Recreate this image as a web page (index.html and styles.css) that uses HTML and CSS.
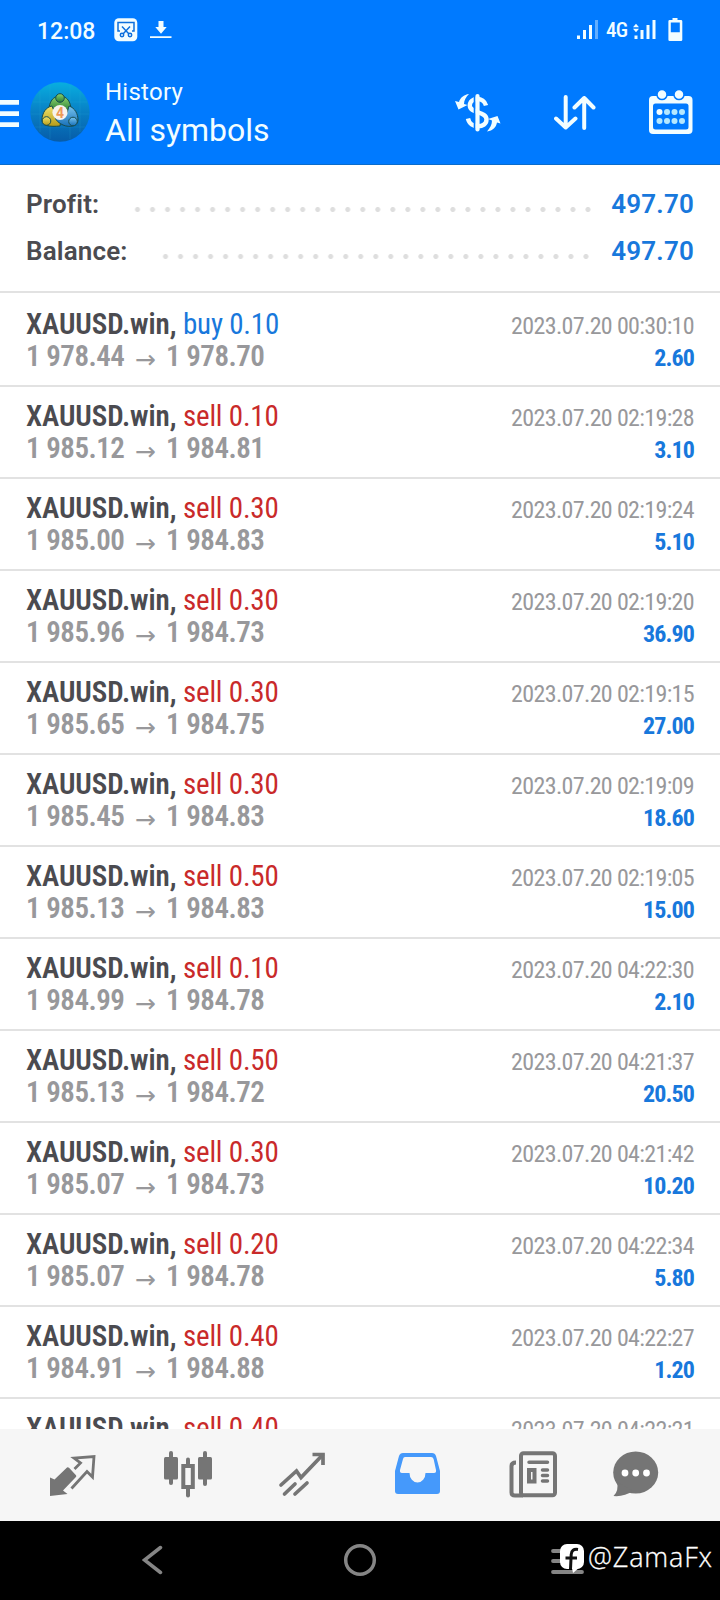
FILE: index.html
```
<!DOCTYPE html>
<html lang="en">
<head>
<meta charset="utf-8">
<title>History</title>
<link rel="stylesheet" href="styles.css">
</head>
<body>
<div class="phone">
  <header class="header">
    <div class="status">
      <span class="clock">12:08</span>
      <svg class="st-cut" width="24" height="24" viewBox="0 0 24 24"><rect x=".3" y=".3" width="23" height="23" rx="4.5" fill="#f2fdff"/><g fill="none" stroke="#0d6fdc" stroke-width="1.5"><path d="M6 13H4V4.500H20V13H18"/><path d="M8 8.500L15 16M16 8.500L9 16"/><circle cx="8" cy="17" r="1.700"/><circle cx="16" cy="17" r="1.700"/></g></svg>
      <svg class="st-down" width="22" height="20" viewBox="0 0 22 20" fill="#f2fdff"><path d="M8.500 1h5v6h3.200L11 13.700 5.300 7h3.200zM0 16.200h21.500v1.800H0z"/></svg>
      <svg class="st-sig" width="22" height="20" viewBox="0 0 22 20" fill="#f2fdff"><path d="M0 15.500h3V19H0zM6 10h3v9H6zM12 5h3v14h-3z"/><path d="M18 0h3v19h-3z" opacity=".4"/></svg>
      <span class="net">4G</span>
      <svg class="st-sig2" width="23" height="20" viewBox="0 0 23 20" fill="#f2fdff"><path d="M1.500 15.500h3V19h-3zM7.500 10h3v9h-3zM13.500 5h3v14h-3zM19.500 0h3v19h-3zM0 7.200L3 3.700 6 7.200zM0 8.800h6L3 12.300z"/></svg>
      <svg class="st-bat" width="15" height="24" viewBox="0 0 15 24"><path fill="#f2fdff" fill-rule="evenodd" d="M4.500 0h5v2H13a1.300 1.300 0 0 1 1.300 1.300v18.400A1.300 1.300 0 0 1 13 23H1.700A1.300 1.300 0 0 1 .4 21.700V3.300A1.300 1.300 0 0 1 1.700 2h2.800zM2.800 4.500v9.700h9V4.500z"/></svg>
    </div>
    <div class="appbar">
      <svg class="menu" width="19" height="28" viewBox="0 0 19 28"><path fill="#f2fdff" d="M0 0h19v4.700H0zM0 11.300h19V16H0zM0 22.300h19V27H0z"/></svg>
      <svg class="logo" width="60" height="60" viewBox="0 0 60 60">
        <defs>
          <linearGradient id="bg" x1="0" y1="0" x2="0" y2="1"><stop offset="0" stop-color="#08aee0"/><stop offset=".5" stop-color="#087fc4"/><stop offset="1" stop-color="#075ca8"/></linearGradient>
          <linearGradient id="gr" x1="0" y1="0" x2="0" y2="1"><stop offset="0" stop-color="#8fd56d"/><stop offset="1" stop-color="#257b35"/></linearGradient>
          <linearGradient id="ye" x1="0" y1="0" x2="0" y2="1"><stop offset="0" stop-color="#f1e36c"/><stop offset="1" stop-color="#b69b18"/></linearGradient>
          <linearGradient id="bl" x1="0" y1="0" x2="0" y2="1"><stop offset="0" stop-color="#79c5ef"/><stop offset="1" stop-color="#176fb8"/></linearGradient>
        </defs>
        <circle cx="30" cy="30" r="29.700" fill="url(#bg)"/>
        <path d="M10 10V50M20 3V57M40 3V57M50 10V50M3 20H57M1 32H59M5 45H55" stroke="#35b6dd" stroke-width=".6" opacity=".3"/>
        <g stroke="#174d50" stroke-width="1">
          <path fill="url(#gr)" d="M19 28c0-8 4-14 11-14s11 6 11 14l-4 2H23z"/>
          <path fill="url(#ye)" d="M22 24c-6 1-10 7-10 14 0 6 8 7 18 6l1-7-7-8z"/>
          <path fill="url(#bl)" d="M39 24c6 2 9 8 9 14 0 6-8 8-15 5-4-2-7-4-8-8l12-4z"/>
          <circle cx="30" cy="16" r="4.300" fill="url(#gr)"/>
          <circle cx="16.500" cy="39" r="4.300" fill="url(#ye)"/>
          <circle cx="43" cy="39.500" r="4.300" fill="url(#bl)"/>
        </g>
        <circle cx="30" cy="30.500" r="7.600" fill="#f7f3ee"/>
        <text class="logo-num" x="30" y="35.500" text-anchor="middle">4</text>
      </svg>
      <div class="titles"><div class="sub">History</div><div class="main">All symbols</div></div>
      <svg class="ic-dollar" width="46" height="40" viewBox="0 0 46 40"><g fill="none" stroke="#f2fdff"><path stroke-width="4.400" d="M31 12.500C29 3.500 14.800 4 14.800 12.500 14.800 20.500 31.500 18 31.500 26.500 31.500 35.500 15 36 13 25.500"/></g><path stroke="#007aff" stroke-width="2" d="M19.700 0V40"/><path stroke="#f2fdff" stroke-width="4.200" stroke-linecap="round" d="M22.500 3V36.500"/><path fill="#f2fdff" d="M14 1C9 1.500 5 5 4 9L0 8l3.500 8.500L12.500 12 9 11c0-4 2-7 5-10zM32 38.500c6-1 9-4 10-9L45.500 30.500 42.500 23l-9.500 3 4 1.500c0 4-2 7.500-5 11z"/></svg>
      <svg class="ic-sort" width="42" height="36" viewBox="0 0 42 36"><path fill="none" stroke="#f2fdff" stroke-width="4" stroke-linecap="round" stroke-linejoin="round" d="M11.700 2V32M2 23.500L11.700 32.500 21.500 23.500M30.200 33V3M20.500 12.500L30.200 3 39.500 12.500"/></svg>
      <svg class="ic-cal" width="44" height="44" viewBox="0 0 44 44"><rect x="0" y="6" width="43.500" height="38" rx="4" fill="#f2fdff"/><rect x="4" y="13.500" width="35.500" height="26" rx="2.500" fill="#007aff"/><g fill="#f2fdff" stroke="#007aff" stroke-width="1.500"><circle cx="13" cy="4.600" r="5"/><circle cx="30" cy="4.600" r="5"/></g><g fill="#b5e8ff"><circle cx="10.500" cy="22" r="3" fill="#f2fdff"/><circle cx="18" cy="22" r="3"/><circle cx="25.500" cy="22" r="3"/><circle cx="33" cy="22" r="3"/><circle cx="10.500" cy="31" r="3"/><circle cx="18" cy="31" r="3"/><circle cx="25.500" cy="31" r="3"/><circle cx="33" cy="31" r="3"/></g></svg>
    </div>
  </header>

  <section class="summary">
    <div class="sum"><span class="k">Profit:</span><i class="dots d1"></i><span class="v">497.70</span></div>
    <div class="sum"><span class="k">Balance:</span><i class="dots d2"></i><span class="v">497.70</span></div>
  </section>

  <main class="list">
    <article class="row"><div class="line"><span class="sym">XAUUSD.win, <b class="buy">buy 0.10</b></span><span class="date">2023.07.20 00:30:10</span></div><div class="line"><span class="price">1 978.44<i>→</i>1 978.70</span><span class="gain">2.60</span></div></article>
    <article class="row"><div class="line"><span class="sym">XAUUSD.win, <b class="sell">sell 0.10</b></span><span class="date">2023.07.20 02:19:28</span></div><div class="line"><span class="price">1 985.12<i>→</i>1 984.81</span><span class="gain">3.10</span></div></article>
    <article class="row"><div class="line"><span class="sym">XAUUSD.win, <b class="sell">sell 0.30</b></span><span class="date">2023.07.20 02:19:24</span></div><div class="line"><span class="price">1 985.00<i>→</i>1 984.83</span><span class="gain">5.10</span></div></article>
    <article class="row"><div class="line"><span class="sym">XAUUSD.win, <b class="sell">sell 0.30</b></span><span class="date">2023.07.20 02:19:20</span></div><div class="line"><span class="price">1 985.96<i>→</i>1 984.73</span><span class="gain">36.90</span></div></article>
    <article class="row"><div class="line"><span class="sym">XAUUSD.win, <b class="sell">sell 0.30</b></span><span class="date">2023.07.20 02:19:15</span></div><div class="line"><span class="price">1 985.65<i>→</i>1 984.75</span><span class="gain">27.00</span></div></article>
    <article class="row"><div class="line"><span class="sym">XAUUSD.win, <b class="sell">sell 0.30</b></span><span class="date">2023.07.20 02:19:09</span></div><div class="line"><span class="price">1 985.45<i>→</i>1 984.83</span><span class="gain">18.60</span></div></article>
    <article class="row"><div class="line"><span class="sym">XAUUSD.win, <b class="sell">sell 0.50</b></span><span class="date">2023.07.20 02:19:05</span></div><div class="line"><span class="price">1 985.13<i>→</i>1 984.83</span><span class="gain">15.00</span></div></article>
    <article class="row"><div class="line"><span class="sym">XAUUSD.win, <b class="sell">sell 0.10</b></span><span class="date">2023.07.20 04:22:30</span></div><div class="line"><span class="price">1 984.99<i>→</i>1 984.78</span><span class="gain">2.10</span></div></article>
    <article class="row"><div class="line"><span class="sym">XAUUSD.win, <b class="sell">sell 0.50</b></span><span class="date">2023.07.20 04:21:37</span></div><div class="line"><span class="price">1 985.13<i>→</i>1 984.72</span><span class="gain">20.50</span></div></article>
    <article class="row"><div class="line"><span class="sym">XAUUSD.win, <b class="sell">sell 0.30</b></span><span class="date">2023.07.20 04:21:42</span></div><div class="line"><span class="price">1 985.07<i>→</i>1 984.73</span><span class="gain">10.20</span></div></article>
    <article class="row"><div class="line"><span class="sym">XAUUSD.win, <b class="sell">sell 0.20</b></span><span class="date">2023.07.20 04:22:34</span></div><div class="line"><span class="price">1 985.07<i>→</i>1 984.78</span><span class="gain">5.80</span></div></article>
    <article class="row"><div class="line"><span class="sym">XAUUSD.win, <b class="sell">sell 0.40</b></span><span class="date">2023.07.20 04:22:27</span></div><div class="line"><span class="price">1 984.91<i>→</i>1 984.88</span><span class="gain">1.20</span></div></article>
    <article class="row"><div class="line"><span class="sym">XAUUSD.win, <b class="sell">sell 0.40</b></span><span class="date">2023.07.20 04:22:21</span></div></article>
  </main>

  <nav class="tabs">
    <svg width="48" height="48" viewBox="0 0 48 48"><path fill="#757575" d="M1 26.500L5.500 28.500 18 16.500q1-.7 2 .3l7 7.500q.8 1-.3 2L14 39.500l4.500 3.500-17.500 2z"/><path fill="none" stroke="#757575" stroke-width="2.800" d="M25.500 18L31.500 12 25 7 45 5.500 43.500 26 38 20.500 22.500 37.500"/></svg>
    <svg width="48" height="48" viewBox="0 0 48 48"><g fill="#757575"><rect x="0" y="6" width="14" height="22.500" rx="1.500"/><rect x="5" y="0" width="4" height="34" rx="2"/><rect x="34" y="6" width="14" height="22.500" rx="1.500"/><rect x="39" y="0" width="4" height="35" rx="2"/><rect x="22" y="6.500" width="4" height="40" rx="2"/></g><rect x="19.300" y="15" width="9.500" height="21" fill="#f6f6f6" stroke="#757575" stroke-width="4"/></svg>
    <svg width="48" height="48" viewBox="0 0 48 48"><g fill="none" stroke="#757575" stroke-width="3.700"><path stroke-linecap="round" d="M3 34L18.500 20 23 26.500 44.500 4M6.500 43L17 33M17 43L29 32"/><path d="M34.500 3.500H45V14"/></g></svg>
    <svg width="48" height="48" viewBox="0 0 48 48"><path fill="#4599fb" d="M9 2h29q3 0 4 3l4 15v20q0 3-3 3H4q-3 0-3-3V20L5 5q1-3 4-3z"/><path fill="#f6f6f6" d="M11 6h26q2 0 2.600 2L42 19q.5 3-2 3h-8.500a8 9.500 0 0 1-16 0H8q-2.500 0-2-3L9 8q.4-2 2-2z"/></svg>
    <svg width="48" height="48" viewBox="0 0 48 48"><g fill="none" stroke="#757575" stroke-width="4"><rect x="12" y="2.300" width="34" height="42" rx="2.500"/><path d="M7 11.500Q2.500 11.500 2.500 15V41.500Q2.500 44.500 6 44.500H14"/><path stroke-linecap="round" stroke-width="3.500" d="M20 11.300H38.500M33.500 19H38.500M33.500 24.500H38.500M33.500 30H38.500"/><rect x="20" y="19" width="5.500" height="11.500"/></g></svg>
    <svg width="48" height="48" viewBox="0 0 48 48"><ellipse cx="23.700" cy="21.500" rx="22.500" ry="21" fill="#757575"/><path fill="#757575" d="M5 31q2 9-3.500 14Q12 46 21 40z"/><g fill="#fff"><circle cx="13" cy="22" r="3.400"/><circle cx="23.700" cy="22" r="3.400"/><circle cx="34.500" cy="22" r="3.400"/></g></svg>
  </nav>

  <footer class="sysnav">
    <svg class="back" width="22" height="30" viewBox="0 0 22 30"><path d="M18.500 2.500L2.500 15 18.500 27.500" fill="none" stroke="#858585" stroke-width="3.500" stroke-linecap="round"/></svg>
    <svg class="home" width="34" height="34" viewBox="0 0 34 34"><circle cx="17" cy="17" r="14.300" fill="none" stroke="#858585" stroke-width="3.500"/></svg>
    <svg class="recent" width="36" height="32" viewBox="0 0 36 32"><path d="M2 7H29M2 17H29M2 28H31" stroke="#858585" stroke-width="3.800" stroke-linecap="round"/><rect x="9" y="0" width="24" height="25" rx="7" fill="#fff"/><path fill="#fff" d="M21 24l1 5 7-6z"/><path d="M27 5.500Q20.500 4.500 20.200 10.500L19.500 25M14.500 14H26" fill="none" stroke="#111" stroke-width="3"/></svg>
    <span class="handle">@ZamaFx</span>
  </footer>
</div>
</body>
</html>
```
FILE: styles.css
```
body { margin: 0; background: #fff; font-family: Roboto, "Liberation Sans", sans-serif; }
.phone { width: 720px; height: 1600px; display: flex; flex-direction: column; overflow: hidden; }
svg { flex: none; display: block; }
.header { height: 165px; box-sizing: border-box; background: #007aff; border-bottom: 1px solid #0b6ccb; color: #f2fdff; flex: none; }
.status { height: 60px; display: flex; align-items: center; padding-left: 37px; }
.clock { font-size: 23px; font-weight: 500; width: 77px; margin-top: 2px; }
.st-down { margin-left: 12px; }
.st-sig { margin-left: 405px; }
.net { font-family: "Roboto Condensed", Roboto, sans-serif; font-stretch: 75%; font-size: 21px; font-weight: 500; letter-spacing: -.7px; width: 28px; margin-left: 7px; }
.st-sig2 { margin-left: -1px; }
.st-bat { margin-left: 12px; }
.appbar { display: flex; height: 104px; align-items: flex-start; }
.menu { margin-top: 40px; }
.logo { margin: 22px 0 0 11px; }
.logo-num { font: bold 14px Roboto, sans-serif; fill: #ed9a58; }
.titles { margin: 18px 0 0 15px; width: 350px; white-space: nowrap; }
.sub { font-size: 24px; line-height: 28px; letter-spacing: .25px; }
.main { font-size: 32px; line-height: 38px; margin-top: 5px; }
.ic-dollar { margin: 33px 0 0 0; }
.ic-sort { margin: 35px 0 0 53px; }
.ic-cal { margin: 30px 0 0 53px; }
.summary { height: 126px; box-sizing: border-box; padding: 16px 26px 0; flex: none; }
.sum { display: flex; height: 47px; line-height: 47px; font-size: 26px; letter-spacing: .15px; }
.k { font-weight: 600; color: #4b4b50; flex: 1; }
.v { font-weight: 600; color: #1878dc; text-align: right; width: 102px; letter-spacing: .2px; }
.dots { height: 5px; margin-top: 26px; background: radial-gradient(circle, #dedede 2.1px, transparent 2.9px) 0 0 / 15.03px 5px repeat-x; }
.d1 { width: 462.2px; }
.d2 { width: 434.2px; }
.list { border-top: 2px solid #e2e2e2; padding-top: 2px; flex: 1; min-height: 0; overflow: hidden; font-family: "Roboto Condensed", Roboto, sans-serif; font-stretch: 75%; }
.row { height: 92px; box-sizing: border-box; border-bottom: 2px solid #e2e2e2; padding: 13px 26px 0; }
.line { display: flex; justify-content: space-between; align-items: baseline; height: 32px; line-height: 32px; white-space: nowrap; }
.sym, .price { font-size: 29px; font-weight: 600; color: #4b4b50; letter-spacing: -.08px; }
.sym b { font-weight: 400; letter-spacing: -.2px; }
.buy { color: #1878dc; }
.sell { color: #c92a2a; }
.price { color: #98989b; letter-spacing: -.5px; }
.price i { font: normal 25px/0 "DejaVu Sans", sans-serif; letter-spacing: 0; vertical-align: -2px; display: inline-block; width: 41.500px; text-align: center; }
.date { font-size: 24px; color: #98989b; letter-spacing: -.65px; }
.gain { font-size: 24px; font-weight: 700; color: #1878dc; letter-spacing: -.9px; }
.tabs { height: 92px; background: #f6f6f6; flex: none; display: grid; grid-template-columns: 115px 114px 116px 115px 103px 105px; padding: 22px 3px 0 49px; box-sizing: border-box; }
.sysnav { height: 79px; background: #000; flex: none; display: flex; align-items: flex-start; color: #fff; }
.back { margin: 24px 0 0 142px; }
.home { margin: 22px 0 0 179px; }
.recent { margin: 23px 0 0 174px; }
.handle { font: 300 27px/34px "Open Sans", "Noto Sans", sans-serif; -webkit-text-stroke: .3px #fff; letter-spacing: .85px; margin: 19px 0 0 1px; white-space: nowrap; }
```
